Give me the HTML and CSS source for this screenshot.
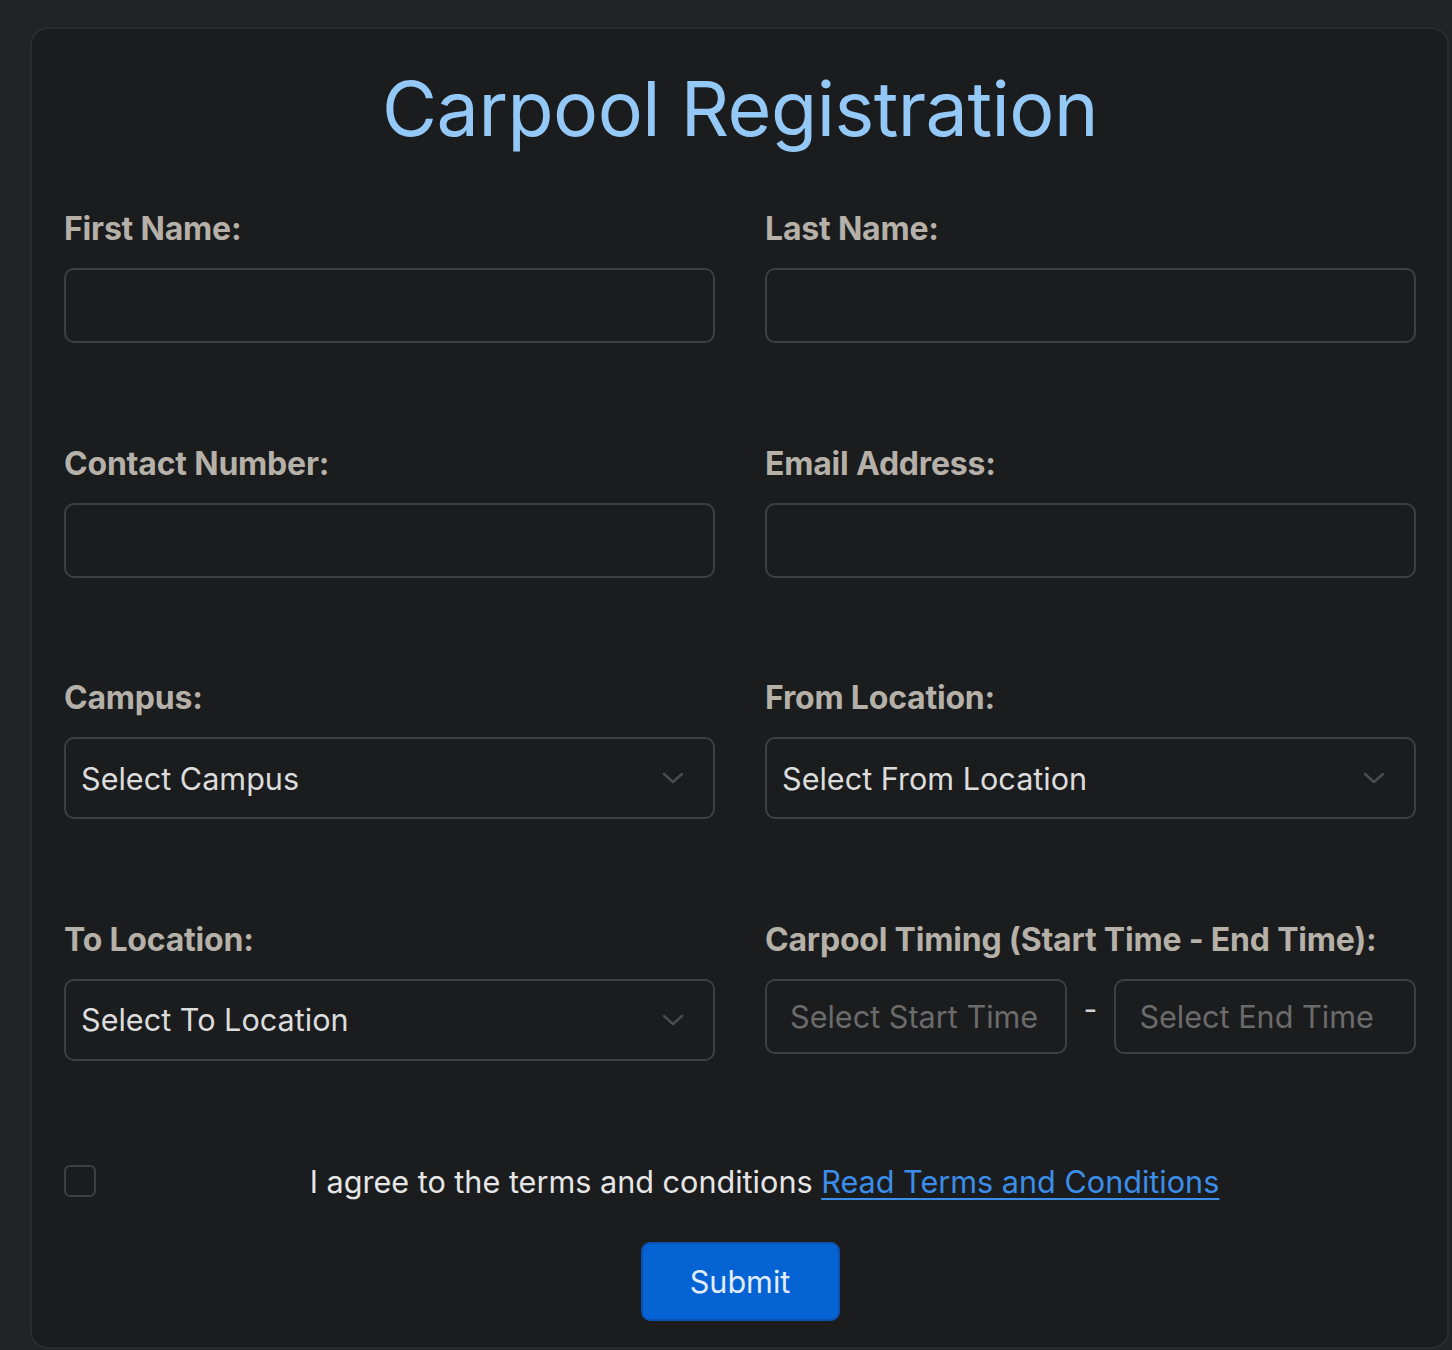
FILE: index.html
```html
<!DOCTYPE html>
<html>
<head>
<meta charset="utf-8">
<link rel="stylesheet" href="styles.css">
</head>
<body>
<div class="card">
  <h1 class="title">Carpool Registration</h1>
  <form class="form">
    <div class="grid">
      <div class="field">
        <label class="label">First Name:</label>
        <input class="input" type="text">
      </div>
      <div class="field">
        <label class="label">Last Name:</label>
        <input class="input" type="text">
      </div>
      <div class="field">
        <label class="label">Contact Number:</label>
        <input class="input" type="text">
      </div>
      <div class="field">
        <label class="label">Email Address:</label>
        <input class="input" type="text">
      </div>
      <div class="field">
        <label class="label">Campus:</label>
        <div class="select">
          <span>Select Campus</span>
          <svg class="chev" viewBox="0 0 24 24" width="24" height="24"><path d="M3 8l9 8 9-8" fill="none" stroke="#4a4c50" stroke-width="2.4" stroke-linecap="round" stroke-linejoin="round"/></svg>
        </div>
      </div>
      <div class="field">
        <label class="label">From Location:</label>
        <div class="select">
          <span>Select From Location</span>
          <svg class="chev" viewBox="0 0 24 24" width="24" height="24"><path d="M3 8l9 8 9-8" fill="none" stroke="#4a4c50" stroke-width="2.4" stroke-linecap="round" stroke-linejoin="round"/></svg>
        </div>
      </div>
      <div class="field">
        <label class="label">To Location:</label>
        <div class="select">
          <span>Select To Location</span>
          <svg class="chev" viewBox="0 0 24 24" width="24" height="24"><path d="M3 8l9 8 9-8" fill="none" stroke="#4a4c50" stroke-width="2.4" stroke-linecap="round" stroke-linejoin="round"/></svg>
        </div>
      </div>
      <div class="field">
        <label class="label">Carpool Timing (Start Time - End Time):</label>
        <div class="times">
          <div class="time">Select Start Time</div>
          <span class="dash">-</span>
          <div class="time">Select End Time</div>
        </div>
      </div>
    </div>
    <div class="agree">
      <span class="check"></span>
      <span class="agree-text">I agree to the terms and conditions <a class="link" href="#">Read Terms and Conditions</a></span>
    </div>
    <div class="actions">
      <button class="submit" type="button">Submit</button>
    </div>
  </form>
</div>
</body>
</html>
```

FILE: styles.css
```css
html, body {
  margin: 0;
  padding: 0;
}
body {
  background: #222325;
  font-family: Inter, "Noto Sans", sans-serif;
  padding: 27px 3px 0 30px;
  height: 1350px;
  box-sizing: border-box;
  overflow: hidden;
}
.card {
  background: #1b1c1e;
  border: 2px solid #2a2b2d;
  border-radius: 18px;
  padding: 25px 31px 0 32px;
  box-sizing: border-box;
  height: 1322px;
}
.title {
  margin: 0;
  text-align: center;
  font-size: 75.3px;
  font-weight: 400;
  color: #94c8f6;
  letter-spacing: -0.5px;
  line-height: 110px;
}
.form {
  margin-top: 46px;
}
.grid {
  display: grid;
  grid-template-columns: 1fr 1fr;
  column-gap: 50px;
  row-gap: 101.5px;
}
.field {
  display: flex;
  flex-direction: column;
}
.label {
  font-size: 32px;
  font-weight: 700;
  color: #b5b0a8;
  line-height: 38px;
  margin-bottom: 20px;
  letter-spacing: -0.2px;
}
.input {
  height: 75px;
  box-sizing: border-box;
  border: 2px solid #3e3f42;
  border-radius: 10px;
  background: #1b1c1e;
  margin: 0;
}
.select {
  height: 82px;
  box-sizing: border-box;
  border: 2px solid #3e3f42;
  border-radius: 10px;
  display: flex;
  align-items: center;
  justify-content: space-between;
  padding: 0 28px 0 15px;
  font-size: 30.6px;
  color: #dcdcdc;
}
.chev {
  display: block;
}
.times {
  display: flex;
  align-items: center;
  gap: 17px;
}
.time {
  flex: 1;
  height: 75px;
  box-sizing: border-box;
  border: 2px solid #3e3f42;
  border-radius: 10px;
  display: flex;
  align-items: center;
  padding: 0 23px;
  font-size: 30.6px;
  color: #6b6b6b;
  white-space: nowrap;
  overflow: hidden;
}
.dash {
  font-size: 30px;
  color: #d0d0d0;
  margin-top: -14px;
}
.agree {
  display: flex;
  align-items: center;
  margin-top: 102px;
}
.check {
  width: 28px;
  height: 28px;
  border: 2px solid #3e3f42;
  border-radius: 6px;
  flex: none;
}
.agree-text {
  flex: 1;
  text-align: center;
  font-size: 30.6px;
  color: #e6e6e6;
  margin-left: 17px;
}
.link {
  color: #3b8ee9;
  text-decoration: underline;
  text-underline-offset: 5px;
  text-decoration-thickness: 2px;
}
.actions {
  display: flex;
  justify-content: center;
  margin-top: 42px;
}
.submit {
  width: 199px;
  height: 79px;
  background: #0563d3;
  border: 2px solid #0b52b0;
  border-radius: 9px;
  color: #e2ecfa;
  font-family: Inter, "Noto Sans", sans-serif;
  font-size: 30.6px;
  cursor: pointer;
}
```
